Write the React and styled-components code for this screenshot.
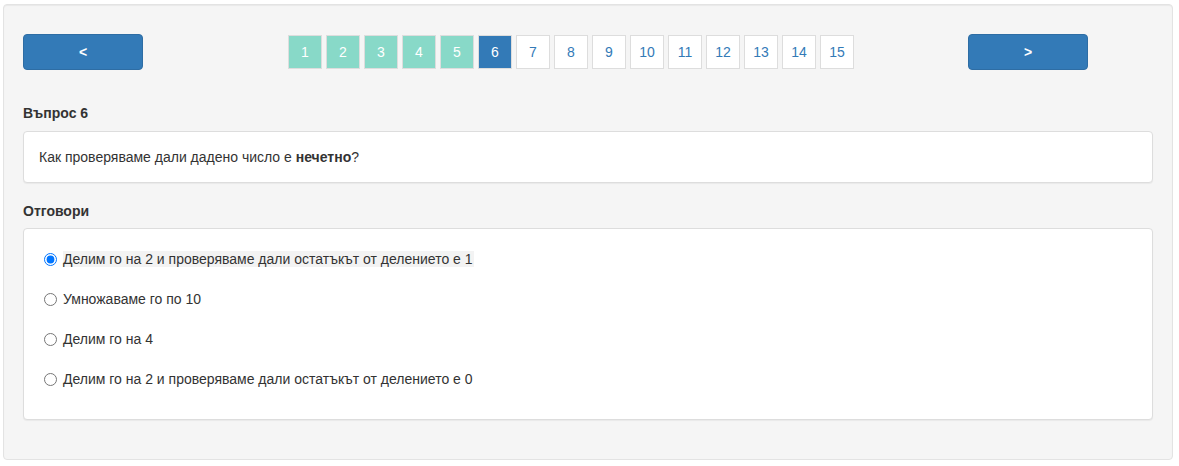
import React from "react";
import styled, { createGlobalStyle } from "styled-components";

const Global = createGlobalStyle`
  html, body { margin: 0; padding: 0; background: #fff; }
  body {
    font-family: "Liberation Sans", Arial, sans-serif;
    font-size: 14px;
    line-height: 20px;
    color: #333;
  }
  * { box-sizing: border-box; }
`;

const Well = styled.div`
  margin: 4px 6px 0 3px;
  padding: 29px 19px 19px;
  background: #f5f5f5;
  border: 1px solid #e3e3e3;
  border-radius: 4px;
  box-shadow: inset 0 1px 1px rgba(0, 0, 0, 0.05);
`;

const NavRow = styled.div`
  display: flex;
  align-items: center;
  height: 36px;
`;

const NavButton = styled.button`
  width: 120px;
  height: 36px;
  margin-left: ${(p) => p.$offset || 0}px;
  background: #337ab7;
  border: 1px solid #2e6da4;
  border-radius: 4px;
  color: #fff;
  font-family: "Liberation Sans", Arial, sans-serif;
  font-size: 14px;
  font-weight: bold;
  padding: 0;
  cursor: pointer;
`;

const Pages = styled.ul`
  display: flex;
  gap: 4px;
  list-style: none;
  margin: 0 0 0 145px;
  padding: 0;
`;

const Page = styled.li`
  width: 34px;
  height: 34px;
  display: flex;
  align-items: center;
  justify-content: center;
  border: 1px solid #ddd;
  font-size: 14px;
  background: ${(p) =>
    p.$state === "done" ? "#88d9c8" : p.$state === "active" ? "#337ab7" : "#fff"};
  color: ${(p) => (p.$state === "todo" ? "#337ab7" : "#fff")};
`;

const Heading = styled.div`
  font-weight: bold;
  margin: ${(p) => p.$top}px 0 ${(p) => p.$bottom}px;
`;

const Panel = styled.div`
  background: #fff;
  border: 1px solid #ddd;
  border-radius: 4px;
  box-shadow: 0 1px 1px rgba(0, 0, 0, 0.05);
  padding: ${(p) => p.$pad};
  margin-bottom: ${(p) => p.$mb || 0}px;
`;

const AnswerList = styled.div`
  display: flex;
  flex-direction: column;
  gap: 20px;
`;

const Answer = styled.label`
  display: flex;
  align-items: center;
  height: 20px;
  cursor: pointer;
`;

const Radio = styled.input`
  width: 13px;
  height: 13px;
  margin: 0 6px 0 0;
`;

const AnswerText = styled.span`
  line-height: 16px;
  padding-right: 1px;
  background: ${(p) => (p.$hl ? "#f3f3f3" : "transparent")};
`;

const answers = [
  "Делим го на 2 и проверяваме дали остатъкът от делението е 1",
  "Умножаваме го по 10",
  "Делим го на 4",
  "Делим го на 2 и проверяваме дали остатъкът от делението е 0",
];

export default function App() {
  const pages = Array.from({ length: 15 }, (_, i) => i + 1);
  return (
    <>
      <Global />
      <Well>
        <NavRow>
          <NavButton>&lt;</NavButton>
          <Pages>
            {pages.map((n) => (
              <Page key={n} $state={n < 6 ? "done" : n === 6 ? "active" : "todo"}>
                {n}
              </Page>
            ))}
          </Pages>
          <NavButton $offset={114}>&gt;</NavButton>
        </NavRow>
        <Heading $top={33} $bottom={8}>Въпрос 6</Heading>
        <Panel $pad="15px 15px">
          Как проверяваме дали дадено число е <b>нечетно</b>?
        </Panel>
        <Heading $top={18} $bottom={7}>Отговори</Heading>
        <Panel $pad="20px 20px 30px" $mb={20}>
          <AnswerList>
            {answers.map((a, i) => (
              <Answer key={i}>
                <Radio type="radio" name="ans" defaultChecked={i === 0} />
                <AnswerText $hl={i === 0}>{a}</AnswerText>
              </Answer>
            ))}
          </AnswerList>
        </Panel>
      </Well>
    </>
  );
}
